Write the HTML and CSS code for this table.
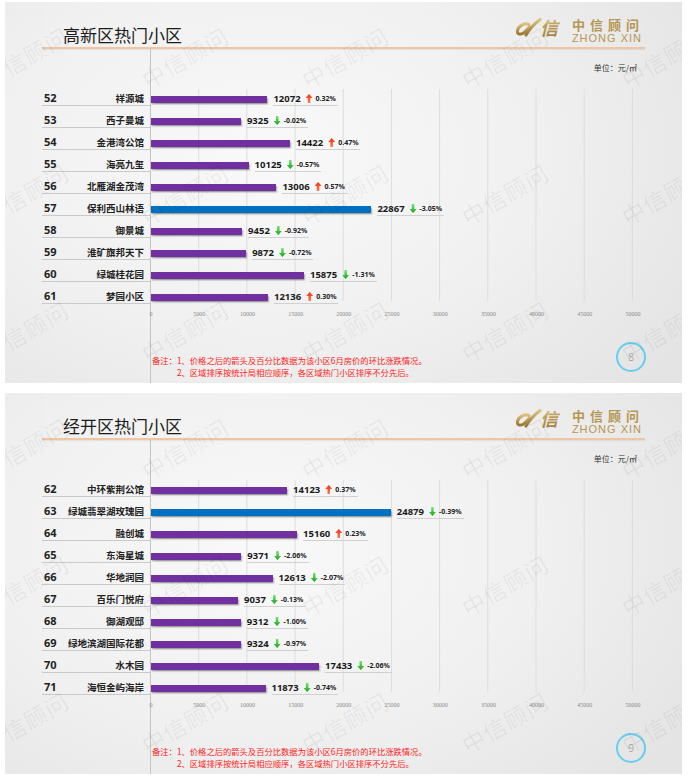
FILE: index.html
```html
<!DOCTYPE html>
<html lang="zh-CN">
<head>
<meta charset="utf-8">
<title>热门小区</title>
<link rel="stylesheet" href="styles.css">
</head>
<body>
<div class="page">

  <section class="slide">
    <header class="head">
      <h1 class="title">高新区热门小区</h1>
      <div class="logo">
        <svg class="logo-mark" viewBox="0 0 44 20" aria-hidden="true">
          <defs><linearGradient id="gold1" x1="0" y1="0" x2="0" y2="1"><stop offset="0" stop-color="#dcc27f"/><stop offset="1" stop-color="#987732"/></linearGradient></defs>
          <path d="M13 6.5 C9 4.5 2.5 7.5 1.5 12.5 C0.8 16 4 17 7.5 15 C10 13.5 12 11 13.5 9" stroke="url(#gold1)" stroke-width="3" fill="none" stroke-linecap="round"/>
          <path d="M10 17 C13 12 18 6 24 1.5" stroke="url(#gold1)" stroke-width="3" fill="none" stroke-linecap="round"/>
          <text x="24" y="17" font-size="18" font-weight="700" font-style="italic" fill="url(#gold1)" font-family="Noto Sans CJK SC, sans-serif">信</text>
        </svg>
        <div class="logo-text"><div class="logo-cn">中信顾问</div><div class="logo-en">ZHONG XIN</div></div>
      </div>
    </header>
    <div class="body">
      <div class="labels">
        <div class="lrow"><div class="lbox"><span class="rank">52</span><span class="name">祥源城</span></div></div>
        <div class="lrow"><div class="lbox"><span class="rank">53</span><span class="name">西子曼城</span></div></div>
        <div class="lrow"><div class="lbox"><span class="rank">54</span><span class="name">金港湾公馆</span></div></div>
        <div class="lrow"><div class="lbox"><span class="rank">55</span><span class="name">海亮九玺</span></div></div>
        <div class="lrow"><div class="lbox"><span class="rank">56</span><span class="name">北雁湖金茂湾</span></div></div>
        <div class="lrow"><div class="lbox"><span class="rank">57</span><span class="name">保利西山林语</span></div></div>
        <div class="lrow"><div class="lbox"><span class="rank">58</span><span class="name">御景城</span></div></div>
        <div class="lrow"><div class="lbox"><span class="rank">59</span><span class="name">淮矿旗邦天下</span></div></div>
        <div class="lrow"><div class="lbox"><span class="rank">60</span><span class="name">绿城桂花园</span></div></div>
        <div class="lrow"><div class="lbox"><span class="rank">61</span><span class="name">梦园小区</span></div></div>
      </div>
      <div class="plot-col">
        <div class="unit">单位：元/㎡</div>
        <div class="bars">
          <div class="brow"><span class="bar" style="width:116.4px"></span><span class="val"><b>12072</b><i class="arrow up"></i><em>0.32%</em></span></div>
          <div class="brow"><span class="bar" style="width:89.9px"></span><span class="val"><b>9325</b><i class="arrow down"></i><em>-0.02%</em></span></div>
          <div class="brow"><span class="bar" style="width:139px"></span><span class="val"><b>14422</b><i class="arrow up"></i><em>0.47%</em></span></div>
          <div class="brow"><span class="bar" style="width:97.6px"></span><span class="val"><b>10125</b><i class="arrow down"></i><em>-0.57%</em></span></div>
          <div class="brow"><span class="bar" style="width:125.4px"></span><span class="val"><b>13006</b><i class="arrow up"></i><em>0.57%</em></span></div>
          <div class="brow"><span class="bar hl" style="width:220.4px"></span><span class="val"><b>22867</b><i class="arrow down"></i><em>-3.05%</em></span></div>
          <div class="brow"><span class="bar" style="width:91.1px"></span><span class="val"><b>9452</b><i class="arrow down"></i><em>-0.92%</em></span></div>
          <div class="brow"><span class="bar" style="width:95.2px"></span><span class="val"><b>9872</b><i class="arrow down"></i><em>-0.72%</em></span></div>
          <div class="brow"><span class="bar" style="width:153px"></span><span class="val"><b>15875</b><i class="arrow down"></i><em>-1.31%</em></span></div>
          <div class="brow"><span class="bar" style="width:117px"></span><span class="val"><b>12136</b><i class="arrow up"></i><em>0.30%</em></span></div>
        </div>
        <div class="axis"><span>0</span><span>5000</span><span>10000</span><span>15000</span><span>20000</span><span>25000</span><span>30000</span><span>35000</span><span>40000</span><span>45000</span><span>50000</span></div>
        <div class="foot">
          <div class="notes">
            <p>备注：1、价格之后的箭头及百分比数据为该小区6月房价的环比涨跌情况。</p>
            <p class="n2">2、区域排序按统计局相应顺序，各区域热门小区排序不分先后。</p>
          </div>
          <div class="pgnum">8</div>
        </div>
      </div>
    </div>
    <div class="wm" aria-hidden="true">
      <span>中信顾问</span><span>中信顾问</span><span>中信顾问</span><span>中信顾问</span><span>中信顾问</span>
      <span>中信顾问</span><span>中信顾问</span><span>中信顾问</span><span>中信顾问</span><span>中信顾问</span>
      <span>中信顾问</span><span>中信顾问</span><span>中信顾问</span><span>中信顾问</span><span>中信顾问</span>
    </div>
  </section>

  <section class="slide">
    <header class="head">
      <h1 class="title">经开区热门小区</h1>
      <div class="logo">
        <svg class="logo-mark" viewBox="0 0 44 20" aria-hidden="true">
          <defs><linearGradient id="gold2" x1="0" y1="0" x2="0" y2="1"><stop offset="0" stop-color="#dcc27f"/><stop offset="1" stop-color="#987732"/></linearGradient></defs>
          <path d="M13 6.5 C9 4.5 2.5 7.5 1.5 12.5 C0.8 16 4 17 7.5 15 C10 13.5 12 11 13.5 9" stroke="url(#gold2)" stroke-width="3" fill="none" stroke-linecap="round"/>
          <path d="M10 17 C13 12 18 6 24 1.5" stroke="url(#gold2)" stroke-width="3" fill="none" stroke-linecap="round"/>
          <text x="24" y="17" font-size="18" font-weight="700" font-style="italic" fill="url(#gold2)" font-family="Noto Sans CJK SC, sans-serif">信</text>
        </svg>
        <div class="logo-text"><div class="logo-cn">中信顾问</div><div class="logo-en">ZHONG XIN</div></div>
      </div>
    </header>
    <div class="body">
      <div class="labels">
        <div class="lrow"><div class="lbox"><span class="rank">62</span><span class="name">中环紫荆公馆</span></div></div>
        <div class="lrow"><div class="lbox"><span class="rank">63</span><span class="name">绿城翡翠湖玫瑰园</span></div></div>
        <div class="lrow"><div class="lbox"><span class="rank">64</span><span class="name">融创城</span></div></div>
        <div class="lrow"><div class="lbox"><span class="rank">65</span><span class="name">东海星城</span></div></div>
        <div class="lrow"><div class="lbox"><span class="rank">66</span><span class="name">华地润园</span></div></div>
        <div class="lrow"><div class="lbox"><span class="rank">67</span><span class="name">百乐门悦府</span></div></div>
        <div class="lrow"><div class="lbox"><span class="rank">68</span><span class="name">御湖观邸</span></div></div>
        <div class="lrow"><div class="lbox"><span class="rank">69</span><span class="name">绿地滨湖国际花都</span></div></div>
        <div class="lrow"><div class="lbox"><span class="rank">70</span><span class="name">水木园</span></div></div>
        <div class="lrow"><div class="lbox"><span class="rank">71</span><span class="name">海恒金屿海岸</span></div></div>
      </div>
      <div class="plot-col">
        <div class="unit">单位：元/㎡</div>
        <div class="bars">
          <div class="brow"><span class="bar" style="width:136.1px"></span><span class="val"><b>14123</b><i class="arrow up"></i><em>0.37%</em></span></div>
          <div class="brow"><span class="bar hl" style="width:239.8px"></span><span class="val"><b>24879</b><i class="arrow down"></i><em>-0.39%</em></span></div>
          <div class="brow"><span class="bar" style="width:146.1px"></span><span class="val"><b>15160</b><i class="arrow up"></i><em>0.23%</em></span></div>
          <div class="brow"><span class="bar" style="width:90.3px"></span><span class="val"><b>9371</b><i class="arrow down"></i><em>-2.06%</em></span></div>
          <div class="brow"><span class="bar" style="width:121.6px"></span><span class="val"><b>12613</b><i class="arrow down"></i><em>-2.07%</em></span></div>
          <div class="brow"><span class="bar" style="width:87.1px"></span><span class="val"><b>9037</b><i class="arrow down"></i><em>-0.13%</em></span></div>
          <div class="brow"><span class="bar" style="width:89.8px"></span><span class="val"><b>9312</b><i class="arrow down"></i><em>-1.00%</em></span></div>
          <div class="brow"><span class="bar" style="width:89.9px"></span><span class="val"><b>9324</b><i class="arrow down"></i><em>-0.97%</em></span></div>
          <div class="brow"><span class="bar" style="width:168.1px"></span><span class="val"><b>17433</b><i class="arrow down"></i><em>-2.06%</em></span></div>
          <div class="brow"><span class="bar" style="width:114.5px"></span><span class="val"><b>11873</b><i class="arrow down"></i><em>-0.74%</em></span></div>
        </div>
        <div class="axis"><span>0</span><span>5000</span><span>10000</span><span>15000</span><span>20000</span><span>25000</span><span>30000</span><span>35000</span><span>40000</span><span>45000</span><span>50000</span></div>
        <div class="foot">
          <div class="notes">
            <p>备注：1、价格之后的箭头及百分比数据为该小区6月房价的环比涨跌情况。</p>
            <p class="n2">2、区域排序按统计局相应顺序，各区域热门小区排序不分先后。</p>
          </div>
          <div class="pgnum">9</div>
        </div>
      </div>
    </div>
    <div class="wm" aria-hidden="true">
      <span>中信顾问</span><span>中信顾问</span><span>中信顾问</span><span>中信顾问</span><span>中信顾问</span>
      <span>中信顾问</span><span>中信顾问</span><span>中信顾问</span><span>中信顾问</span><span>中信顾问</span>
      <span>中信顾问</span><span>中信顾问</span><span>中信顾问</span><span>中信顾问</span><span>中信顾问</span>
    </div>
  </section>

</div>
</body>
</html>
```

FILE: styles.css
```css
* { box-sizing: border-box; }

body {
  margin: 0;
  background: #ffffff;
  font-family: "Noto Sans", "Noto Sans CJK SC", sans-serif;
  color: #222;
}

.page {
  padding: 2px 0 0 5px;
  display: flex;
  flex-direction: column;
  gap: 10px;
}

.slide {
  position: relative;
  width: 677px;
  height: 381px;
  overflow: hidden;
  background: radial-gradient(ellipse 75% 90% at 38% 40%, #f9f9f9 0%, #f0f0f0 55%, #e4e4e4 100%);
}

/* header */
.head {
  display: flex;
  justify-content: space-between;
  align-items: flex-end;
  margin-left: 37px;
  width: 603px;
  height: 47px;
  border-bottom: 2px solid #f1c5a1;
  box-shadow: 0 1px 1px rgba(0, 0, 0, 0.06);
}

.title {
  margin: 0 0 2px 21px;
  font: 400 17px/20px "Noto Sans CJK SC", sans-serif;
  color: #1c1c1c;
}

.logo {
  display: flex;
  align-items: flex-start;
  gap: 12px;
  margin: 0 3px 3px 0;
}

.logo-mark {
  display: block;
  width: 44px;
  height: 20px;
}

.logo-text {
  display: flex;
  flex-direction: column;
  gap: 1px;
}

.logo-cn {
  font: 700 13px/14px "Noto Sans CJK SC", sans-serif;
  letter-spacing: 5px;
  margin-right: -5px;
  color: #b59752;
}

.logo-en {
  font: 400 11px/11px "Liberation Sans", sans-serif;
  letter-spacing: 1px;
  color: #b59752;
}

/* body */
.body {
  display: flex;
  height: 334px;
}

.labels {
  flex: none;
  width: 145px;
  padding-top: 39px;
}

.lrow {
  height: 22px;
  padding-top: 3px;
  margin-left: 37px;
}

.lbox {
  height: 15px;
  display: flex;
  align-items: center;
  justify-content: space-between;
  padding: 0 6px 0 2px;
  border-bottom: 1px solid #c9c9c9;
}

.rank {
  font: 700 11px/14px "Noto Sans", sans-serif;
  color: #222;
}

.name {
  font: 700 9.5px/14px "Noto Sans CJK SC", sans-serif;
  color: #222;
}

.plot-col {
  flex: 1;
  display: flex;
  flex-direction: column;
  border-left: 1px solid #c4c4c4;
}

.unit {
  height: 39px;
  padding: 14px 45px 0 0;
  text-align: right;
  font: 400 8px/10px "Noto Sans CJK SC", sans-serif;
  color: #333;
}

.bars {
  width: 484px;
  height: 220px;
  background-image: linear-gradient(to right, #dcdcdc 0, #dcdcdc 1px, transparent 1px);
  background-size: 48.2px 212px;
  background-repeat: repeat-x;
  background-position: -1px 1px;
}

.brow {
  height: 22px;
  display: flex;
  align-items: center;
}

.bar {
  flex: none;
  height: 7px;
  background: #7030a0;
  box-shadow: 1px 1.5px 1.5px rgba(0, 0, 0, 0.35);
}

.bar.hl { background: #0070c0; }

.val {
  display: flex;
  align-items: center;
  margin-left: 6px;
  height: 13px;
  padding-right: 2px;
  border-bottom: 1px solid #d0d0d0;
}

.val b {
  font: 700 9.5px/12px "Noto Sans", sans-serif;
  color: #1a1a1a;
}

.val em {
  font: 700 7px/12px "Noto Sans", sans-serif;
  font-style: normal;
  color: #222;
}

.arrow {
  display: block;
  width: 7px;
  height: 9px;
  margin: 0 3px 0 5px;
}

.arrow.up {
  background: linear-gradient(#ff2a10, #ff7a55);
  clip-path: polygon(50% 0, 100% 45%, 68% 45%, 68% 100%, 32% 100%, 32% 45%, 0 45%);
}

.arrow.down {
  background: linear-gradient(#7be07b, #12a812);
  clip-path: polygon(32% 0, 68% 0, 68% 55%, 100% 55%, 50% 100%, 0 55%, 32% 55%);
}

.axis {
  display: flex;
  height: 12px;
  margin-left: -24px;
}

.axis span {
  flex: none;
  width: 48.2px;
  text-align: center;
  font: 400 6px/12px "Liberation Serif", serif;
  color: #8a8a8a;
}

.foot {
  display: flex;
  justify-content: space-between;
  align-items: flex-start;
  margin-top: 22px;
  padding: 0 36px 0 1px;
}

.notes {
  padding-top: 12px;
  font: 400 8.3px/12px "Noto Sans CJK SC", sans-serif;
  color: #f22;
}

.notes p {
  margin: 0;
  white-space: nowrap;
}

.notes .n2 { padding-left: 3em; }

.pgnum {
  width: 30px;
  height: 30px;
  border: 2px solid #66cdf0;
  border-radius: 50%;
  display: flex;
  align-items: center;
  justify-content: center;
  font: 300 10px/1 "Open Sans", sans-serif;
  color: #8c8c8c;
}

/* watermark overlay */
.wm {
  position: absolute;
  left: -60px;
  top: -13px;
  display: grid;
  grid-template-columns: repeat(5, 160px);
  grid-auto-rows: 137px;
  pointer-events: none;
}

.wm span {
  display: flex;
  align-items: center;
  justify-content: center;
  transform: rotate(-30deg);
  white-space: nowrap;
  font: 400 23px/1 "Noto Sans CJK SC", sans-serif;
  letter-spacing: 1px;
  color: rgba(0, 0, 0, 0.06);
}
```
